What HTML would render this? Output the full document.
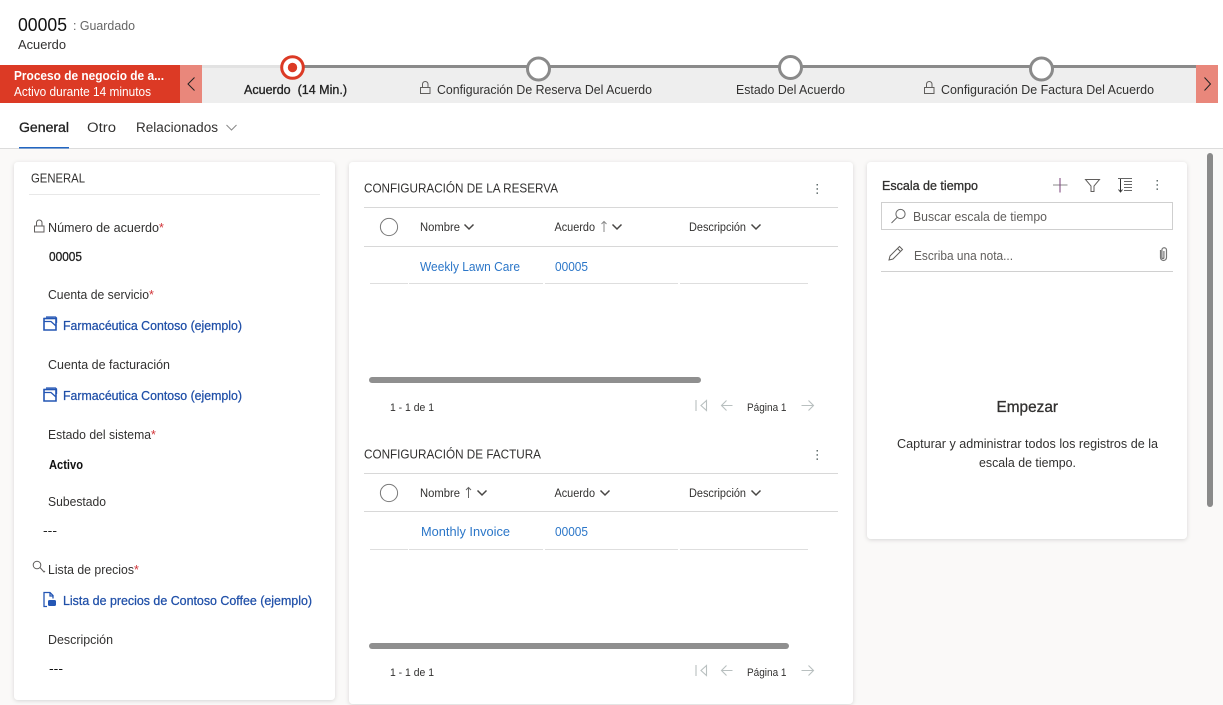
<!DOCTYPE html>
<html lang="es">
<head>
<meta charset="utf-8">
<title>Acuerdo 00005</title>
<style>
html,body{margin:0;padding:0;width:1223px;height:705px;overflow:hidden;background:#fff}
svg{display:block}
text{font-family:"Liberation Sans",sans-serif;fill:#323130;font-size:12.5px}
.s{stroke:currentColor;stroke-width:.3}
.ic{fill:none;stroke:#605e5c;stroke-width:1}
.card{fill:#fff;filter:url(#sh)}
.lnk{fill:#2b76c8}
.blu{fill:#1f4fa8;stroke:#1f4fa8;stroke-width:.25}
.chev{fill:none;stroke:#484644;stroke-width:1.5}
.pg{fill:none;stroke:#b9c0c0;stroke-width:1.1}
</style>
</head>
<body>
<svg width="1223" height="705" viewBox="0 0 1223 705" xmlns="http://www.w3.org/2000/svg">
<defs>
<filter id="sh" x="-5%" y="-5%" width="110%" height="110%"><feDropShadow dx="0" dy="1" stdDeviation="2" flood-color="#000" flood-opacity=".14"/></filter>
<g id="lock" fill="none" stroke="#605e5c" stroke-width="1"><rect x=".5" y="6.500" width="9.500" height="6"/><path d="M2.500 6.500V3.200a2.750 2.750 0 0 1 5.500 0v3.300"/></g>
<g id="acct"><path d="M1 2.500h12v11.500H1z" fill="#fff" stroke="#2456b4" stroke-width="1.600"/><path d="M1 2.500h9.500M3 1h9.500l1 1v5M1.500 5.500h6.500l5 4.500" fill="none" stroke="#2456b4" stroke-width="1.300"/></g>
<g id="more" fill="#5f6b6b"><rect x="0" y="0" width="1.500" height="1.500"/><rect x="0" y="4.200" width="1.500" height="1.500"/><rect x="0" y="8.400" width="1.500" height="1.500"/></g>
<g id="pager"><path class="pg" d="M.5 0v11M11 0.500L5.500 5.500 11 10.500z"/><path class="pg" d="M37 5.500H26M31 .5l-5 5 5 5"/><path class="pg" d="M106 5.500h12M113 .5l5 5-5 5"/></g>
</defs>

<rect width="1223" height="705" fill="#fff"/>
<rect y="149" width="1223" height="556" fill="#faf9f8"/>
<rect y="148" width="1223" height="1" fill="#dcdcdc"/>

<!-- Header -->
<text x="18" y="31" style="font-size:18.500px;fill:#111" textLength="49" lengthAdjust="spacingAndGlyphs">00005</text>
<text x="73" y="30" style="fill:#666" textLength="62" lengthAdjust="spacingAndGlyphs">: Guardado</text>
<text x="18" y="49" textLength="48" lengthAdjust="spacingAndGlyphs">Acuerdo</text>

<!-- BPF -->
<rect x="0" y="65" width="180" height="38" fill="#dc3a25"/>
<rect x="180" y="65" width="22" height="38" fill="#e9877b"/>
<rect x="202" y="65" width="994" height="38" fill="#eeeeee"/>
<rect x="202" y="65" width="90" height="3" fill="#e2e2e2"/>
<rect x="292" y="65" width="904" height="3" fill="#8a8a8a"/>
<rect x="1196" y="65" width="22" height="38" fill="#e9877b"/>
<path d="M194.500 77.500l-6.500 6.500 6.500 6.500" fill="none" stroke="#222" stroke-width="1"/>
<path d="M1204.500 77.500l6 6.500-6 6.500" fill="none" stroke="#222" stroke-width="1"/>
<text x="14" y="80" style="fill:#fff;font-weight:bold" textLength="150" lengthAdjust="spacingAndGlyphs">Proceso de negocio de a...</text>
<text x="14" y="96" style="fill:#fff" textLength="137" lengthAdjust="spacingAndGlyphs">Activo durante 14 minutos</text>

<circle cx="292.500" cy="67.500" r="10.800" fill="#fff" stroke="#dc3a25" stroke-width="3"/>
<circle cx="292.500" cy="67.500" r="4.700" fill="#dc3a25"/>
<circle cx="538.500" cy="69" r="11" fill="#fff" stroke="#8a8a8a" stroke-width="3"/>
<circle cx="790.500" cy="67.500" r="11" fill="#fff" stroke="#8a8a8a" stroke-width="3"/>
<circle cx="1041.500" cy="69" r="11" fill="#fff" stroke="#8a8a8a" stroke-width="3"/>

<text class="s" x="244" y="94" style="color:#222;fill:#222" textLength="103" lengthAdjust="spacingAndGlyphs" xml:space="preserve">Acuerdo  (14 Min.)</text>
<use href="#lock" x="420" y="81"/>
<text x="437" y="94" textLength="215" lengthAdjust="spacingAndGlyphs">Configuración De Reserva Del Acuerdo</text>
<text x="736" y="94" textLength="109" lengthAdjust="spacingAndGlyphs">Estado Del Acuerdo</text>
<use href="#lock" x="924" y="81"/>
<text x="941" y="94" textLength="213" lengthAdjust="spacingAndGlyphs">Configuración De Factura Del Acuerdo</text>

<!-- Tabs -->
<text class="s" x="19" y="132" style="font-size:13.500px;color:#222;fill:#222" textLength="50" lengthAdjust="spacingAndGlyphs">General</text>
<rect x="19" y="147" width="50" height="1.500" fill="#2266c2"/>
<text x="87" y="132" style="font-size:13.500px" textLength="29" lengthAdjust="spacingAndGlyphs">Otro</text>
<text x="136" y="132" style="font-size:13.500px" textLength="82" lengthAdjust="spacingAndGlyphs">Relacionados</text>
<path d="M226.500 125l5 5 5-5" fill="none" stroke="#888" stroke-width="1"/>

<!-- Left card -->
<rect class="card" x="14" y="162" width="321" height="538" rx="4"/>
<text x="31" y="182.500" textLength="54" lengthAdjust="spacingAndGlyphs">GENERAL</text>
<rect x="29" y="194" width="291" height="1" fill="#e8e8e8"/>

<use href="#lock" x="34" y="219.500"/>
<text x="48" y="232" textLength="111" lengthAdjust="spacingAndGlyphs">Número de acuerdo</text>
<text x="159" y="232" style="fill:#d13438">*</text>
<text class="s" x="49" y="261" style="color:#222;fill:#222" textLength="33" lengthAdjust="spacingAndGlyphs">00005</text>

<text x="48" y="299" textLength="101" lengthAdjust="spacingAndGlyphs">Cuenta de servicio</text>
<text x="149" y="299" style="fill:#d13438">*</text>
<use href="#acct" x="43" y="316"/>
<text class="blu" x="63" y="330" textLength="179" lengthAdjust="spacingAndGlyphs">Farmacéutica Contoso (ejemplo)</text>

<text x="48" y="369" textLength="122" lengthAdjust="spacingAndGlyphs">Cuenta de facturación</text>
<use href="#acct" x="43" y="387"/>
<text class="blu" x="63" y="400" textLength="179" lengthAdjust="spacingAndGlyphs">Farmacéutica Contoso (ejemplo)</text>

<text x="48" y="439" textLength="103" lengthAdjust="spacingAndGlyphs">Estado del sistema</text>
<text x="151" y="439" style="fill:#d13438">*</text>
<text x="49" y="469" style="font-weight:bold;fill:#111" textLength="34" lengthAdjust="spacingAndGlyphs">Activo</text>

<text x="48" y="506" textLength="58" lengthAdjust="spacingAndGlyphs">Subestado</text>
<text x="43" y="535" style="fill:#222" textLength="14" lengthAdjust="spacingAndGlyphs">---</text>

<g fill="none" stroke="#605e5c" stroke-width="1"><circle cx="37" cy="565" r="3.800"/><path d="M40 567.500l4 4.500 1-1"/></g>
<text x="48" y="574" textLength="86" lengthAdjust="spacingAndGlyphs">Lista de precios</text>
<text x="134" y="574" style="fill:#d13438">*</text>
<g fill="none" stroke="#2456b4" stroke-width="1.300"><path d="M47 606.500h-3v-14h6l3 3v3"/><path d="M50 592.500v3.500h3"/><rect x="48" y="600" width="8" height="6" rx="1.500" fill="#2456b4" stroke="none"/></g>
<text class="blu" x="63" y="605" textLength="249" lengthAdjust="spacingAndGlyphs">Lista de precios de Contoso Coffee (ejemplo)</text>

<text x="48" y="644" textLength="65" lengthAdjust="spacingAndGlyphs">Descripción</text>
<text x="49" y="673" style="fill:#111" textLength="14" lengthAdjust="spacingAndGlyphs">---</text>

<!-- Middle card -->
<rect class="card" x="349" y="162" width="504" height="542" rx="4"/>

<text x="364" y="192.500" style="font-size:13px" textLength="194" lengthAdjust="spacingAndGlyphs">CONFIGURACIÓN DE LA RESERVA</text>
<use href="#more" x="816.500" y="184"/>
<rect x="364" y="207" width="474" height="1" fill="#d8d8d8"/>
<circle cx="389" cy="227" r="8.600" fill="#fff" stroke="#7a7a7a" stroke-width="1"/>
<text x="420" y="231" style="font-size:11.500px" textLength="40" lengthAdjust="spacingAndGlyphs">Nombre</text>
<path class="chev" d="M464.500 224.500l4.500 4.500 4.500-4.500"/>
<text x="554.500" y="231" style="font-size:11.500px" textLength="40.500" lengthAdjust="spacingAndGlyphs">Acuerdo</text>
<path d="M604 232v-10.500M601.500 224l2.500-2.500 2.500 2.500" fill="none" stroke="#8a8a8a" stroke-width="1"/>
<path class="chev" d="M612.500 224.500l4.500 4.500 4.500-4.500"/>
<text x="689" y="231" style="font-size:11.500px" textLength="57" lengthAdjust="spacingAndGlyphs">Descripción</text>
<path class="chev" d="M751.500 224.500l4.500 4.500 4.500-4.500"/>
<rect x="364" y="246" width="474" height="1" fill="#d8d8d8"/>
<text class="lnk" x="420" y="271" textLength="100" lengthAdjust="spacingAndGlyphs">Weekly Lawn Care</text>
<text class="lnk" x="555" y="271" textLength="33" lengthAdjust="spacingAndGlyphs">00005</text>
<g fill="#dedede"><rect x="370" y="283" width="38" height="1"/><rect x="409" y="283" width="134" height="1"/><rect x="545" y="283" width="133" height="1"/><rect x="680" y="283" width="128" height="1"/></g>
<rect x="369" y="377" width="332" height="6" rx="3" fill="#8f8f8f"/>
<text x="390" y="411" style="font-size:11px" textLength="44" lengthAdjust="spacingAndGlyphs">1 - 1 de 1</text>
<use href="#pager" x="695.500" y="400"/>
<text x="747" y="411" style="font-size:11px" textLength="39.500" lengthAdjust="spacingAndGlyphs">Página 1</text>

<text x="364" y="458.500" style="font-size:13px" textLength="177" lengthAdjust="spacingAndGlyphs">CONFIGURACIÓN DE FACTURA</text>
<use href="#more" x="816.500" y="450"/>
<rect x="364" y="473" width="474" height="1" fill="#d8d8d8"/>
<circle cx="389" cy="493" r="8.600" fill="#fff" stroke="#7a7a7a" stroke-width="1"/>
<text x="420" y="497" style="font-size:11.500px" textLength="40" lengthAdjust="spacingAndGlyphs">Nombre</text>
<path d="M468.500 498v-10.500M466 490l2.500-2.500 2.500 2.500" fill="none" stroke="#666" stroke-width="1"/>
<path class="chev" d="M477.500 490.500l4.500 4.500 4.500-4.500"/>
<text x="554.500" y="497" style="font-size:11.500px" textLength="40.500" lengthAdjust="spacingAndGlyphs">Acuerdo</text>
<path class="chev" d="M600.500 490.500l4.500 4.500 4.500-4.500"/>
<text x="689" y="497" style="font-size:11.500px" textLength="57" lengthAdjust="spacingAndGlyphs">Descripción</text>
<path class="chev" d="M751.500 490.500l4.500 4.500 4.500-4.500"/>
<rect x="364" y="511" width="474" height="1" fill="#d8d8d8"/>
<text class="lnk" x="421" y="536" textLength="89" lengthAdjust="spacingAndGlyphs">Monthly Invoice</text>
<text class="lnk" x="555" y="536" textLength="33" lengthAdjust="spacingAndGlyphs">00005</text>
<g fill="#dedede"><rect x="370" y="549" width="38" height="1"/><rect x="409" y="549" width="134" height="1"/><rect x="545" y="549" width="133" height="1"/><rect x="680" y="549" width="128" height="1"/></g>
<rect x="369" y="643" width="420" height="6" rx="3" fill="#8f8f8f"/>
<text x="390" y="676" style="font-size:11px" textLength="44" lengthAdjust="spacingAndGlyphs">1 - 1 de 1</text>
<use href="#pager" x="695.500" y="665"/>
<text x="747" y="676" style="font-size:11px" textLength="39.500" lengthAdjust="spacingAndGlyphs">Página 1</text>

<!-- Right card -->
<rect class="card" x="867" y="162" width="320" height="377" rx="4"/>
<text class="s" x="882" y="190" style="color:#323130" textLength="96" lengthAdjust="spacingAndGlyphs">Escala de tiempo</text>
<path d="M1053 185h14.500" stroke="#8a8a8a" stroke-width="1" fill="none"/>
<path d="M1060 178v14.500" stroke="#7a3f7a" stroke-width="1" fill="none"/>
<path class="ic" d="M1085.500 179.500h14l-5.500 6.500v5.500h-3V186z"/>
<path d="M1118 178.500h14M1124 181.500h8M1124 184.500h8M1124 187.500h8M1124 190.500h8" stroke="#666" stroke-width="1" fill="none"/>
<path d="M1120.500 179v12.500M1118.500 189.500l2 2.500 2-2.500" stroke="#333" stroke-width="1" fill="none"/>
<use href="#more" x="1156.500" y="180"/>
<rect x="881.500" y="202.500" width="291" height="27" fill="#fff" stroke="#cfcfcf"/>
<circle cx="900.500" cy="214" r="4.600" fill="none" stroke="#666"/>
<path d="M897 217.500l-5.500 5.500" stroke="#666" fill="none"/>
<text x="913" y="221" style="fill:#605e5c" textLength="134" lengthAdjust="spacingAndGlyphs">Buscar escala de tiempo</text>
<path class="ic" d="M889 260l1-4 9.500-9.500 3 3-9.500 9.500zM897.500 248.500l3 3"/>
<text x="914" y="260" style="fill:#605e5c" textLength="99" lengthAdjust="spacingAndGlyphs">Escriba una nota...</text>
<path d="M1160.500 250v7.500a3 3 0 0 0 6 0V250a2.300 2.300 0 0 0-4.600 0v7.500a1 1 0 0 0 2 0V251" fill="none" stroke="#777" stroke-width="1.200"/>
<rect x="881" y="271" width="292" height="1" fill="#d0d0d0"/>
<text class="s" x="996.500" y="412" style="font-size:15.500px;color:#323130" textLength="61.500" lengthAdjust="spacingAndGlyphs">Empezar</text>
<text x="897" y="448" textLength="261" lengthAdjust="spacingAndGlyphs">Capturar y administrar todos los registros de la</text>
<text x="979" y="467" textLength="97" lengthAdjust="spacingAndGlyphs">escala de tiempo.</text>

<!-- Page scrollbar -->
<rect x="1207" y="153" width="6" height="354" rx="3" fill="#8a8a8a"/>
</svg>
</body>
</html>
